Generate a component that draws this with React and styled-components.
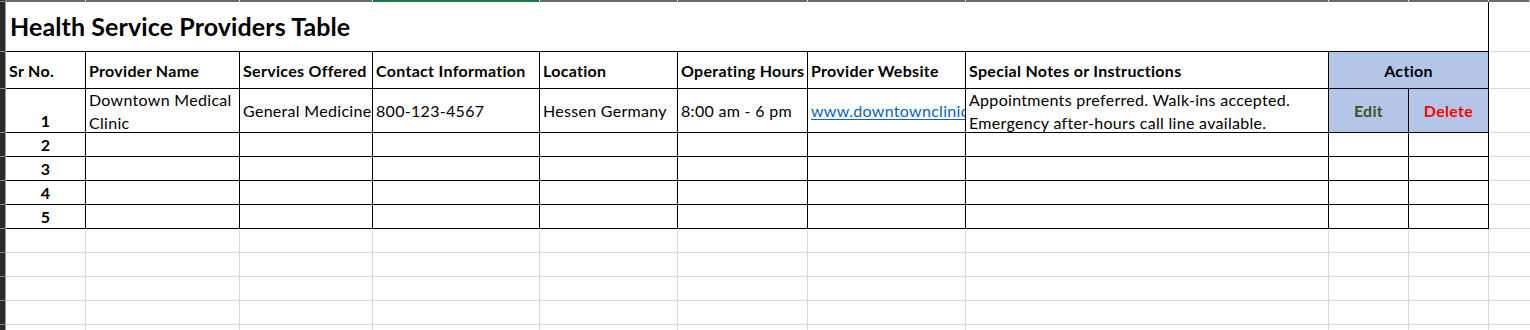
import styled, { createGlobalStyle } from "styled-components";

const GlobalStyle = createGlobalStyle`
  html, body {
    margin: 0;
    padding: 0;
    background: #ffffff;
  }
  body {
    font-family: Lato, "Liberation Sans", sans-serif;
    color: #000000;
  }
`;

// sheet columns A..J, the cut off column on the right fills the rest
const COL_WIDTHS = [80, 154, 133, 167, 138, 130, 158, 363, 80, 80];

const HEADERS = [
  "Sr No.",
  "Provider Name",
  "Services Offered",
  "Contact Information",
  "Location",
  "Operating Hours",
  "Provider Website",
  "Special Notes or Instructions",
];

const provider = {
  name: "Downtown Medical Clinic",
  services: "General Medicine",
  contact: "800-123-4567",
  location: "Hessen Germany",
  hours: "8:00 am - 6 pm",
  website: "www.downtownclinic.com",
  notes: "Appointments preferred. Walk-ins accepted. Emergency after-hours call line available.",
};

const EMPTY_ROWS = [2, 3, 4, 5];
const SPARE_ROWS = [6, 7, 8, 9, 10];

export default function App() {
  return (
    <>
      <GlobalStyle />
      <Sheet>
        {/* column header strip, mostly cut off */}
        <RowEdge />
        {COL_WIDTHS.map((_, i) => (
          <ColEdge key={i} $active={i === 3} />
        ))}
        <ColEdge />

        {/* title */}
        <RowEdge />
        <TitleCell>Health Service Providers Table</TitleCell>
        <OuterCell />

        {/* headers */}
        <RowEdge />
        {HEADERS.map((h) => (
          <HeadCell key={h}>{h}</HeadCell>
        ))}
        <ActionHead>Action</ActionHead>
        <OuterCell />

        {/* first record */}
        <RowEdge />
        <NumCell>1</NumCell>
        <DataCell $wrap>{provider.name}</DataCell>
        <DataCell>{provider.services}</DataCell>
        <DataCell>{provider.contact}</DataCell>
        <DataCell>{provider.location}</DataCell>
        <DataCell>{provider.hours}</DataCell>
        <DataCell>
          <Link>{provider.website}</Link>
        </DataCell>
        <DataCell $wrap>{provider.notes}</DataCell>
        <ActionCell $tone="#375623">Edit</ActionCell>
        <ActionCell $tone="#ff0000">Delete</ActionCell>
        <OuterCell />

        {EMPTY_ROWS.map((n) => (
          <Row key={n}>
            <RowEdge />
            <NumCell>{n}</NumCell>
            {COL_WIDTHS.slice(1).map((_, i) => (
              <DataCell key={i} />
            ))}
            <OuterCell />
          </Row>
        ))}

        {SPARE_ROWS.map((n) => (
          <Row key={n}>
            <RowEdge />
            {COL_WIDTHS.map((_, i) => (
              <GridCell key={i} />
            ))}
            <OuterCell />
          </Row>
        ))}
      </Sheet>
    </>
  );
}

const Sheet = styled.div`
  display: grid;
  grid-template-columns: 6px ${COL_WIDTHS.map((w) => `${w}px`).join(" ")} 1fr;
  grid-template-rows: 2px 50px 37px 44px repeat(9, 24px);
  width: 1530px;
  height: 330px;
  overflow: hidden;
  font-size: 16px;
  letter-spacing: 0.3px;
`;

const Row = styled.div`
  display: contents;
`;

const RowEdge = styled.div`
  box-sizing: border-box;
  background: #2b2b2b;
  border-right: 1px solid #9a9a9a;
  border-bottom: 1px solid #8a8a8a;
`;

const ColEdge = styled.div`
  box-sizing: border-box;
  background: ${(p) => (p.$active ? "#217346" : "#6a6a6a")};
  border-right: 1px solid #d6d6d6;
`;

const InkCell = styled.div`
  box-sizing: border-box;
  border-right: 1px solid #000000;
  border-bottom: 1px solid #000000;
  overflow: hidden;
  min-width: 0;
`;

const TitleCell = styled(InkCell)`
  grid-column: span 10;
  display: flex;
  align-items: center;
  padding: 0 0 1px 4px;
  font-size: 25px;
  font-weight: 700;
  letter-spacing: 0.1px;
`;

const HeadCell = styled(InkCell)`
  display: flex;
  align-items: center;
  padding: 0 3px;
  font-weight: 700;
  white-space: nowrap;
`;

const ActionHead = styled(HeadCell)`
  grid-column: span 2;
  justify-content: center;
  background: #b4c6e7;
`;

const DataCell = styled(InkCell)`
  display: flex;
  align-items: center;
  padding: 0 3px;
  line-height: 23px;
  white-space: ${(p) => (p.$wrap ? "normal" : "nowrap")};
`;

const NumCell = styled(InkCell)`
  display: flex;
  align-items: flex-end;
  justify-content: center;
  line-height: 20px;
  padding-bottom: 1px;
  font-weight: 700;
`;

const ActionCell = styled(InkCell)`
  display: flex;
  align-items: center;
  justify-content: center;
  background: #b4c6e7;
  font-weight: 700;
  color: ${(p) => p.$tone};
`;

const Link = styled.span`
  color: #0563c1;
  text-decoration: underline;
  text-underline-offset: 2px;
`;

const GridCell = styled.div`
  box-sizing: border-box;
  border-right: 1px solid #dadada;
  border-bottom: 1px solid #dadada;
`;

const OuterCell = styled.div`
  box-sizing: border-box;
  border-bottom: 1px solid #dadada;
`;
